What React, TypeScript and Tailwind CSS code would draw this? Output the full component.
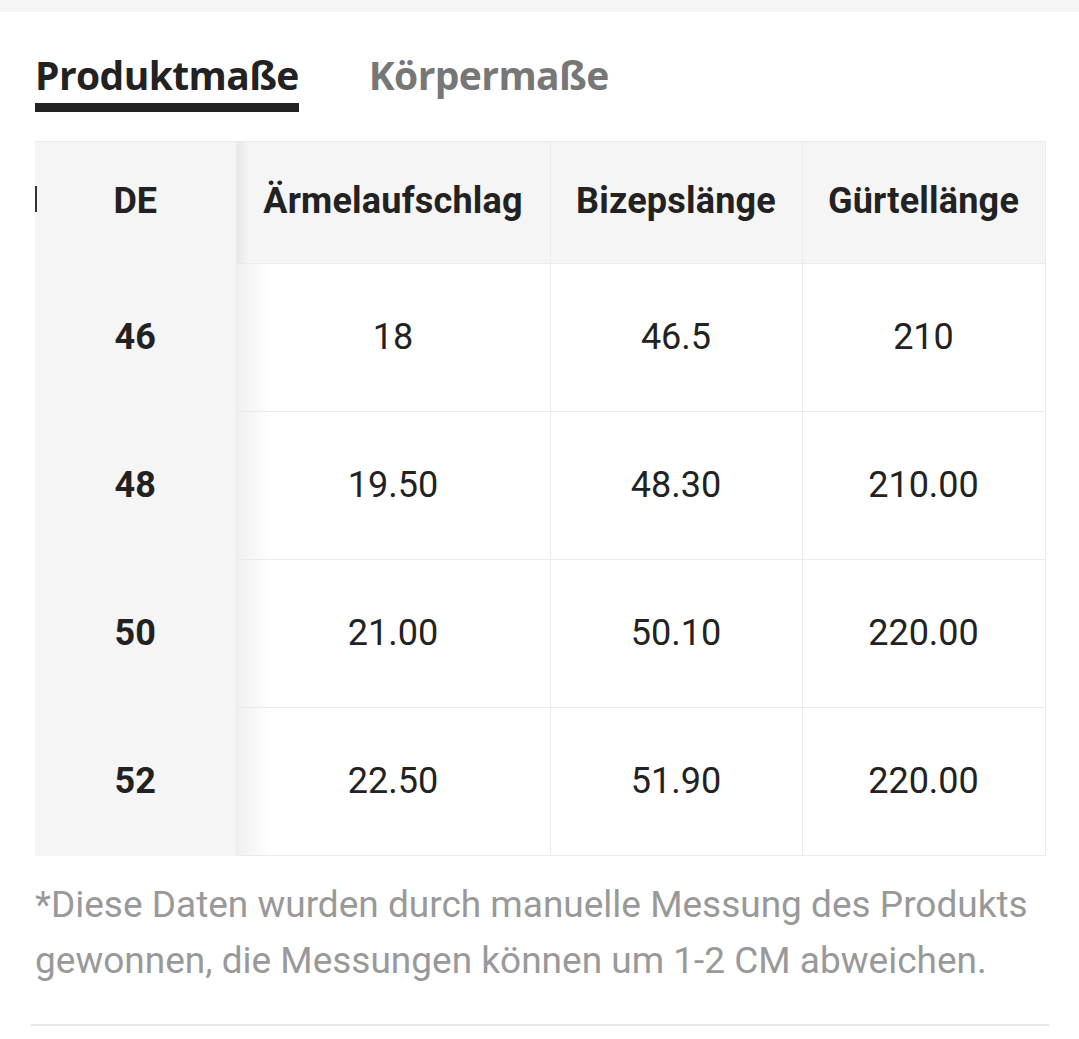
import React from "react";

const rows = [
  ["46", "18", "46.5", "210"],
  ["48", "19.50", "48.30", "210.00"],
  ["50", "21.00", "50.10", "220.00"],
  ["52", "22.50", "51.90", "220.00"],
];

export default function App() {
  return (
    <div className="w-[1079px] h-[1039px] bg-white overflow-hidden" style={{ fontFamily: "Roboto, 'Liberation Sans', sans-serif" }}>
      <div className="h-[12px] bg-[#f5f5f5]" />
      <div className="flex items-start gap-[70px] pl-[35px] pt-[40px]" style={{ fontFamily: "'Open Sans', 'Noto Sans', sans-serif" }}>
        <div className="flex flex-col">
          <span className="text-[39px] leading-[46px] font-bold text-[#222] tracking-[-0.6px]">Produktmaße</span>
          <div className="mt-[5px] h-[9px] bg-[#222]" />
        </div>
        <span className="text-[39px] leading-[46px] font-bold text-[#777] tracking-[-0.6px]">Körpermaße</span>
      </div>
      <div className="ml-[35px] mt-[29px] w-[1010px] relative">
        <table className="border-collapse table-fixed w-[1010px]">
          <colgroup>
            <col className="w-[201px]" />
            <col className="w-[314px]" />
            <col className="w-[252px]" />
            <col className="w-[243px]" />
          </colgroup>
          <thead>
            <tr className="h-[122px] bg-[#f5f5f5]">
              <th className="relative text-[36px] font-bold text-[#222] text-center border-r border-[#ebebeb] border-t pb-[4px]">
                <span className="absolute left-0 top-[44px] w-[2px] h-[26px] bg-[#333]" />
                DE
              </th>
              <th className="relative text-[36px] font-bold text-[#222] text-center border-r border-t border-b border-[#ebebeb] pb-[4px] tracking-[0.2px]">
                <span className="absolute left-0 top-0 bottom-0 w-[12px] bg-gradient-to-r from-[#e8e8e8] to-transparent" />
                Ärmelaufschlag
              </th>
              <th className="text-[36px] font-bold text-[#222] text-center border-r border-t border-b border-[#ebebeb] pb-[4px] tracking-[0.2px]">Bizepslänge</th>
              <th className="text-[36px] font-bold text-[#222] text-center border-r border-t border-b border-[#ebebeb] pb-[4px] tracking-[0.2px]">Gürtellänge</th>
            </tr>
          </thead>
          <tbody>
            {rows.map((r) => (
              <tr key={r[0]} className="h-[148px]">
                <td className="bg-[#f5f5f5] text-center text-[36px] font-bold text-[#222] border-r border-[#ebebeb] pb-[2px]">{r[0]}</td>
                <td className="relative text-center text-[36px] text-[#222] border-r border-b border-[#ebebeb] pb-[2px]">
                  <span className="absolute left-0 top-0 bottom-0 w-[34px] bg-gradient-to-r from-[#f0f0f0] to-transparent" />
                  <span className="relative">{r[1]}</span>
                </td>
                <td className="text-center text-[36px] text-[#222] border-r border-b border-[#ebebeb] pb-[2px]">{r[2]}</td>
                <td className="text-center text-[36px] text-[#222] border-r border-b border-[#ebebeb] pb-[2px]">{r[3]}</td>
              </tr>
            ))}
          </tbody>
        </table>
      </div>
      <p className="ml-[35px] mt-[21px] w-[1010px] text-[37px] leading-[56px] text-[#999]">
        *Diese Daten wurden durch manuelle Messung des Produkts gewonnen, die Messungen können um 1-2 CM abweichen.
      </p>
      <div className="ml-[31px] mt-[35px] w-[1018px] h-[2px] bg-[#e8e8e8]" />
    </div>
  );
}
